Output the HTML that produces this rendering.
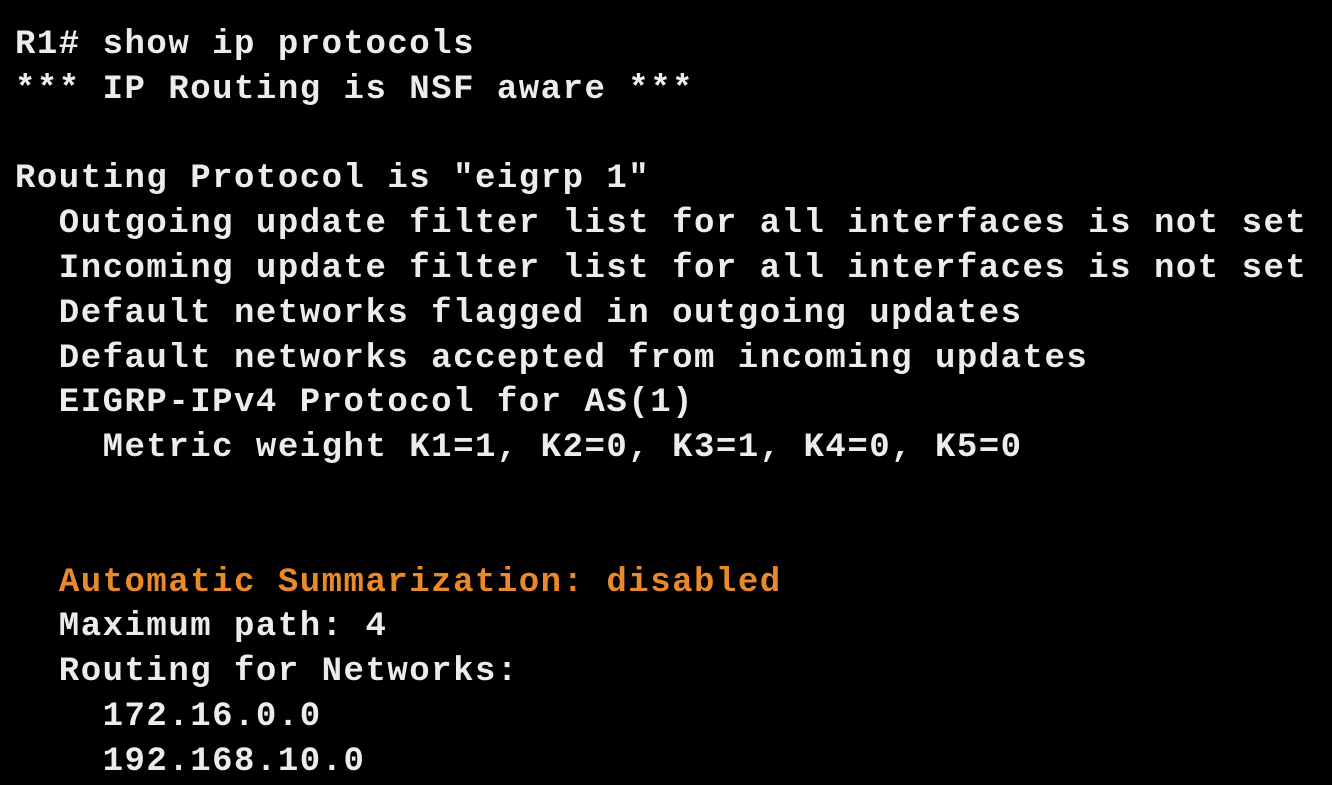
<!DOCTYPE html>
<html><head><meta charset="utf-8"><style>
html,body{margin:0;padding:0;background:#000;width:1332px;height:780px;overflow:hidden}
pre{margin:0;position:absolute;left:15px;top:23px;font-family:"Liberation Mono","Courier New",monospace;font-weight:bold;font-size:34px;letter-spacing:1.5px;line-height:44.8px;color:#ececec;white-space:pre}
.o{color:#e88a2c}
</style></head><body><pre>R1# show ip protocols
*** IP Routing is NSF aware ***

Routing Protocol is "eigrp 1"
  Outgoing update filter list for all interfaces is not set
  Incoming update filter list for all interfaces is not set
  Default networks flagged in outgoing updates
  Default networks accepted from incoming updates
  EIGRP-IPv4 Protocol for AS(1)
    Metric weight K1=1, K2=0, K3=1, K4=0, K5=0


  <span class="o">Automatic Summarization: disabled</span>
  Maximum path: 4
  Routing for Networks:
    172.16.0.0
    192.168.10.0</pre></body></html>
